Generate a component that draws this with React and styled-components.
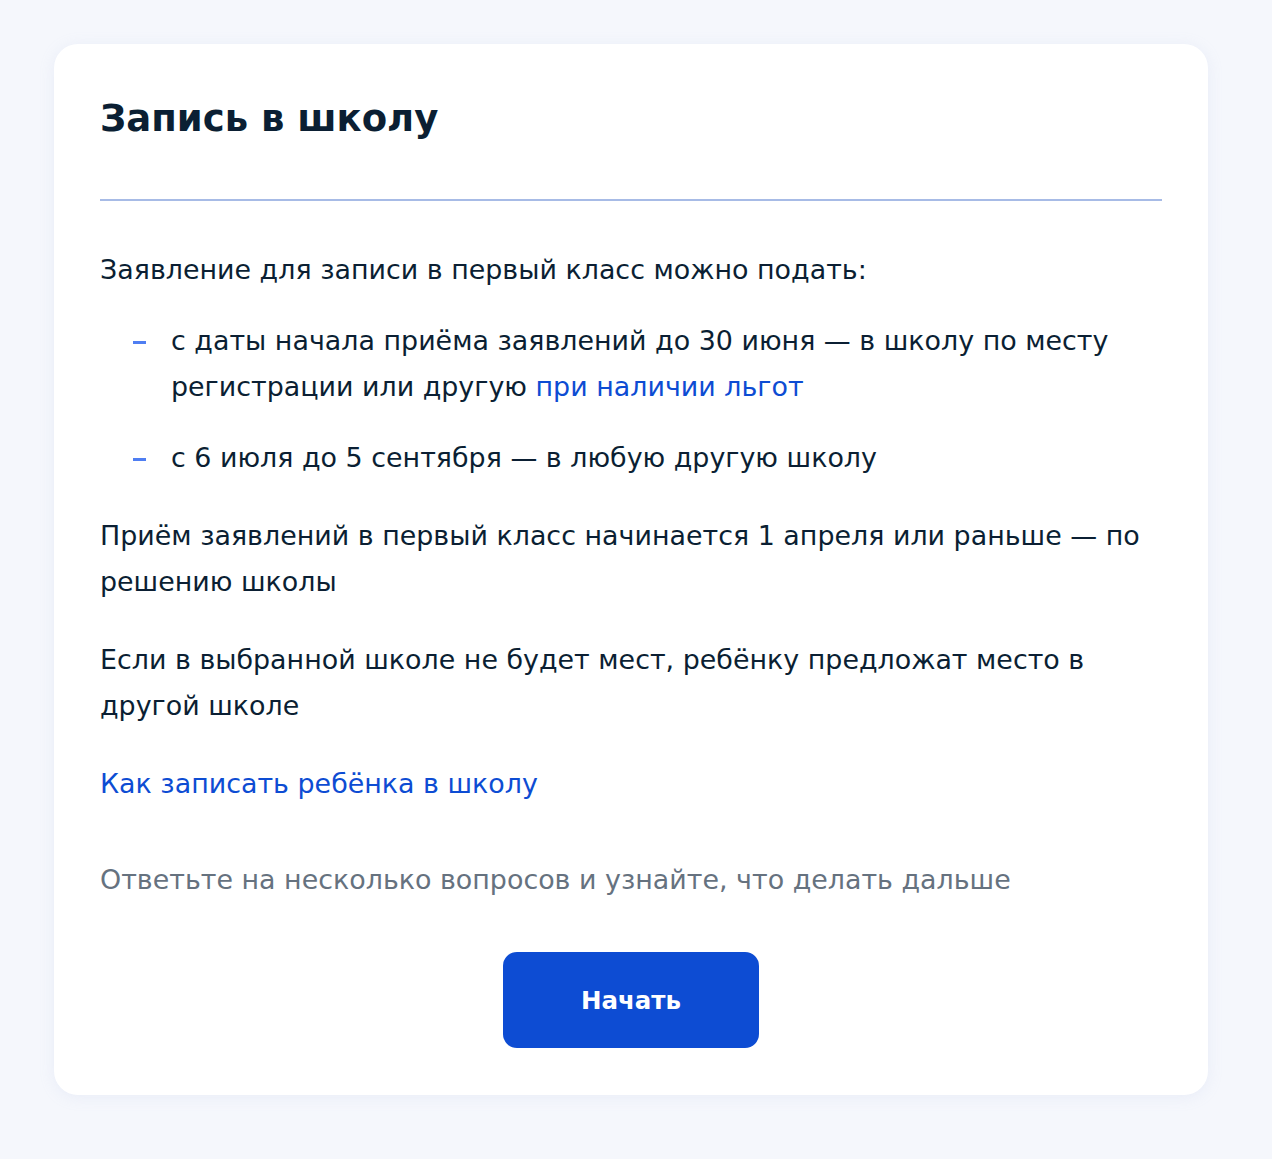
import React from "react";
import styled, { createGlobalStyle } from "styled-components";

const Global = createGlobalStyle`
  html, body { margin: 0; padding: 0; background: #f5f7fc; }
  body { font-family: "DejaVu Sans", Lato, sans-serif; color: #0b1f33; }
`;

const Page = styled.div`
  padding: 44px 64px 64px 54px;
`;

const Card = styled.section`
  background: #fff;
  border-radius: 24px;
  box-shadow: 0 2px 16px rgba(160, 180, 220, 0.14);
  padding: 49px 46px 47px 46px;
`;

const Title = styled.h1`
  margin: 0;
  font-size: 37px;
  line-height: 52px;
  font-weight: 700;
  color: #0b1f33;
`;

const Divider = styled.hr`
  border: 0;
  height: 2px;
  background: #a7bbe6;
  margin: 54px 0 46px;
`;

const P = styled.p`
  margin: 0 0 ${(p) => p.$mb ?? 32}px;
  font-size: 26.9px;
  line-height: 46px;
  color: ${(p) => (p.$muted ? "#66727f" : "#0b1f33")};
`;

const List = styled.ul`
  list-style: none;
  margin: 0 0 32px;
  padding: 0 0 0 33px;
  display: flex;
  flex-direction: column;
  gap: 25px;
`;

const Item = styled.li`
  position: relative;
  padding-left: 38px;
  font-size: 26.9px;
  line-height: 46px;
  &::before {
    content: "";
    position: absolute;
    left: 0;
    top: 23px;
    width: 13px;
    height: 3px;
    background: #4f7ef2;
  }
`;

const Link = styled.a`
  color: #0d4cd3;
  text-decoration: none;
`;

const ButtonRow = styled.div`
  display: flex;
  justify-content: center;
  margin-top: 49px;
`;

const Button = styled.button`
  width: 256px;
  height: 96px;
  border: 0;
  border-radius: 14px;
  background: #0d4cd3;
  color: #fff;
  font-family: "DejaVu Sans", Lato, sans-serif;
  font-size: 24.5px;
  font-weight: 700;
  cursor: pointer;
`;

export default function App() {
  return (
    <Page>
      <Global />
      <Card>
        <Title>Запись в школу</Title>
        <Divider />
        <P $mb={25}>Заявление для записи в первый класс можно подать:</P>
        <List>
          <Item>
            с даты начала приёма заявлений до 30 июня — в школу по месту
            регистрации или другую <Link href="#">при наличии льгот</Link>
          </Item>
          <Item>с 6 июля до 5 сентября — в любую другую школу</Item>
        </List>
        <P>
          Приём заявлений в первый класс начинается 1 апреля или раньше — по
          решению школы
        </P>
        <P>
          Если в выбранной школе не будет мест, ребёнку предложат место в
          другой школе
        </P>
        <P $mb={50}>
          <Link href="#">Как записать ребёнка в школу</Link>
        </P>
        <P $muted $mb={0}>
          Ответьте на несколько вопросов и узнайте, что делать дальше
        </P>
        <ButtonRow>
          <Button>Начать</Button>
        </ButtonRow>
      </Card>
    </Page>
  );
}
